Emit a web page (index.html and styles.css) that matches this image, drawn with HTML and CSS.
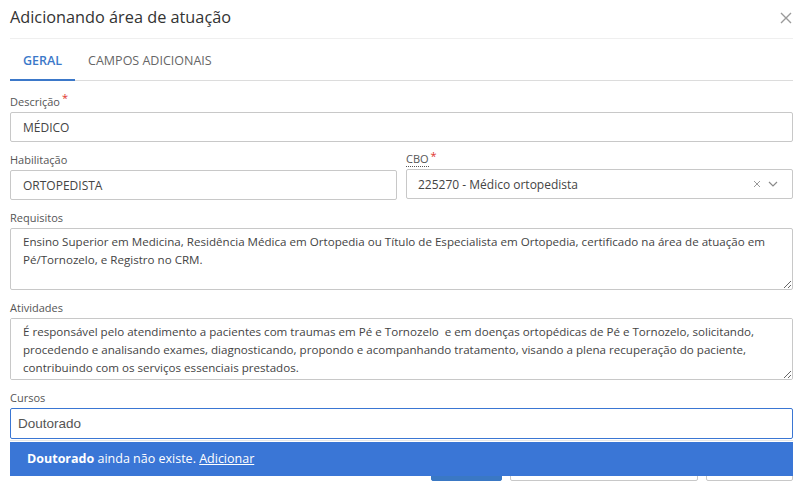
FILE: index.html
```html
<!DOCTYPE html>
<html lang="pt-BR">
<head>
<meta charset="utf-8">
<title>Adicionando área de atuação</title>
<link rel="stylesheet" href="styles.css">
</head>
<body>
<div class="modal">
  <header class="modal-header">
    <h1 class="modal-title">Adicionando área de atuação</h1>
    <button class="close" type="button" aria-label="Fechar">
      <svg width="12" height="12" viewBox="0 0 12 12"><path d="M1 1L11 11M11 1L1 11" stroke="#9a9a9a" stroke-width="1.4" fill="none"/></svg>
    </button>
  </header>
  <nav class="tabs">
    <a class="tab active">GERAL</a>
    <a class="tab">CAMPOS ADICIONAIS</a>
  </nav>
  <form class="form">
    <div class="field">
      <label class="label">Descrição<span class="req">*</span></label>
      <input class="control" type="text" value="MÉDICO">
    </div>
    <div class="row">
      <div class="field">
        <label class="label">Habilitação</label>
        <input class="control" type="text" value="ORTOPEDISTA">
      </div>
      <div class="field">
        <label class="label"><span class="abbr">CBO</span><span class="req">*</span></label>
        <div class="control select">
          <span class="select-value">225270 - Médico ortopedista</span>
          <span class="select-icons">
            <svg width="8" height="8" viewBox="0 0 8 8"><path d="M1 1L7 7M7 1L1 7" stroke="#9a9a9a" stroke-width="1" fill="none"/></svg>
            <svg width="10" height="6" viewBox="0 0 10 6"><path d="M1 1L5 5L9 1" stroke="#8a8a8a" stroke-width="1.2" fill="none"/></svg>
          </span>
        </div>
      </div>
    </div>
    <div class="field">
      <label class="label">Requisitos</label>
      <textarea class="control area">Ensino Superior em Medicina, Residência Médica em Ortopedia ou Título de Especialista em Ortopedia, certificado na área de atuação em Pé/Tornozelo, e Registro no CRM.</textarea>
    </div>
    <div class="field">
      <label class="label">Atividades</label>
      <textarea class="control area">É responsável pelo atendimento a pacientes com traumas em Pé e Tornozelo  e em doenças ortopédicas de Pé e Tornozelo, solicitando, procedendo e analisando exames, diagnosticando, propondo e acompanhando tratamento, visando a plena recuperação do paciente, contribuindo com os serviços essenciais prestados.</textarea>
    </div>
    <div class="field">
      <label class="label">Cursos</label>
      <div class="combo">
        <input class="control focused" type="text" value="Doutorado">
        <div class="menu">
          <div class="menu-item"><strong>Doutorado</strong> ainda não existe. <a class="menu-link">Adicionar</a></div>
        </div>
      </div>
    </div>
    <div class="actions">
      <button class="btn primary" type="button">SALVAR</button>
      <button class="btn" type="button">SALVAR E ADICIONAR NOVO</button>
      <button class="btn" type="button">CANCELAR</button>
    </div>
  </form>
</div>
</body>
</html>
```
FILE: styles.css
```css
* { box-sizing: border-box; }
html, body { margin: 0; padding: 0; background: #fff; }
body {
  font-family: "Open Sans", "DejaVu Sans", sans-serif;
  color: #444;
  overflow: hidden;
}
.modal { padding: 0 9px 0 10px; }
.modal-header {
  height: 39px;
  border-bottom: 1px solid #efefef;
  display: flex;
  align-items: center;
  justify-content: space-between;
}
.modal-title {
  margin: 0;
  font-size: 16.3px;
  font-weight: 400;
  color: #333;
  line-height: 22px;
  margin-top: -4px;
}
.close {
  border: 0;
  background: none;
  padding: 0;
  margin-right: 1px;
  margin-top: -3px;
  display: flex;
}
.tabs {
  display: flex;
  border-bottom: 1px solid #dcdcdc;
  height: 42px;
  align-items: flex-end;
}
.tab {
  font-size: 12.5px;
  line-height: 18px;
  padding: 0 13px 9px;
  color: #666;
  border-bottom: 2px solid transparent;
  margin-bottom: -1px;
}
.tab.active {
  color: #3b78c9;
  font-weight: 600;
  border-bottom-color: #3b78c9;
}
.form { padding-top: 13px; }
.field { margin-bottom: 10px; display: flex; flex-direction: column; }
.row { display: grid; grid-template-columns: 1fr 1fr; column-gap: 9px; }
.label {
  font-size: 11px;
  line-height: 16px;
  color: #555;
  margin-bottom: 2px;
  display: flex;
  align-items: flex-start;
}
.req {
  color: #e0342c;
  font-size: 11px;
  line-height: 10px;
  margin-left: 2px;
  margin-top: -1px;
}
.abbr {
  border-bottom: 1px dotted #555;
  line-height: 14px;
}
.control {
  display: block;
  width: 100%;
  height: 30px;
  border: 1px solid #c8c8c8;
  border-radius: 2px;
  padding: 0 12px;
  font-family: "Open Sans", "DejaVu Sans", sans-serif;
  font-size: 12px;
  color: #444;
  background: #fff;
  outline: none;
}
.select {
  display: flex;
  align-items: center;
  justify-content: space-between;
  padding-left: 11px;
  padding-right: 14px;
}
.select-icons { display: flex; align-items: center; gap: 7px; }
.area {
  height: 62px;
  padding: 4px 12px;
  font-size: 11.6px;
  line-height: 18px;
  resize: vertical;
}
.combo { position: relative; }
.control.focused {
  border-color: #3a76d3;
  font-family: "Liberation Sans", Arial, sans-serif;
  font-size: 13.5px;
  padding-left: 7px;
  color: #555;
  height: 31px;
}
.menu {
  position: absolute;
  left: 0;
  right: 0;
  top: calc(100% + 1px);
  background: #fff;
  border-top: 1px solid #e6e6e6;
  padding-top: 1px;
  z-index: 2;
}
.menu-item {
  background: #3a76d6;
  color: #fff;
  font-size: 12.5px;
  height: 34px;
  line-height: 34px;
  padding-left: 17px;
}
.menu-item strong { font-weight: 700; }
.menu-link { color: #fff; text-decoration: underline; }
.actions {
  display: flex;
  justify-content: flex-end;
  gap: 8px;
  margin-top: 9px;
}
.btn {
  height: 32px;
  border: 1px solid #c8c8c8;
  border-radius: 2px;
  background: #fff;
  color: #333;
  font-family: "Open Sans", "DejaVu Sans", sans-serif;
  font-size: 12px;
  font-weight: 600;
  padding: 0 12px;
}
.btn.primary {
  background: #3a78c4;
  border-color: #3a78c4;
  color: #fff;
  padding: 0 12px;
}
```
